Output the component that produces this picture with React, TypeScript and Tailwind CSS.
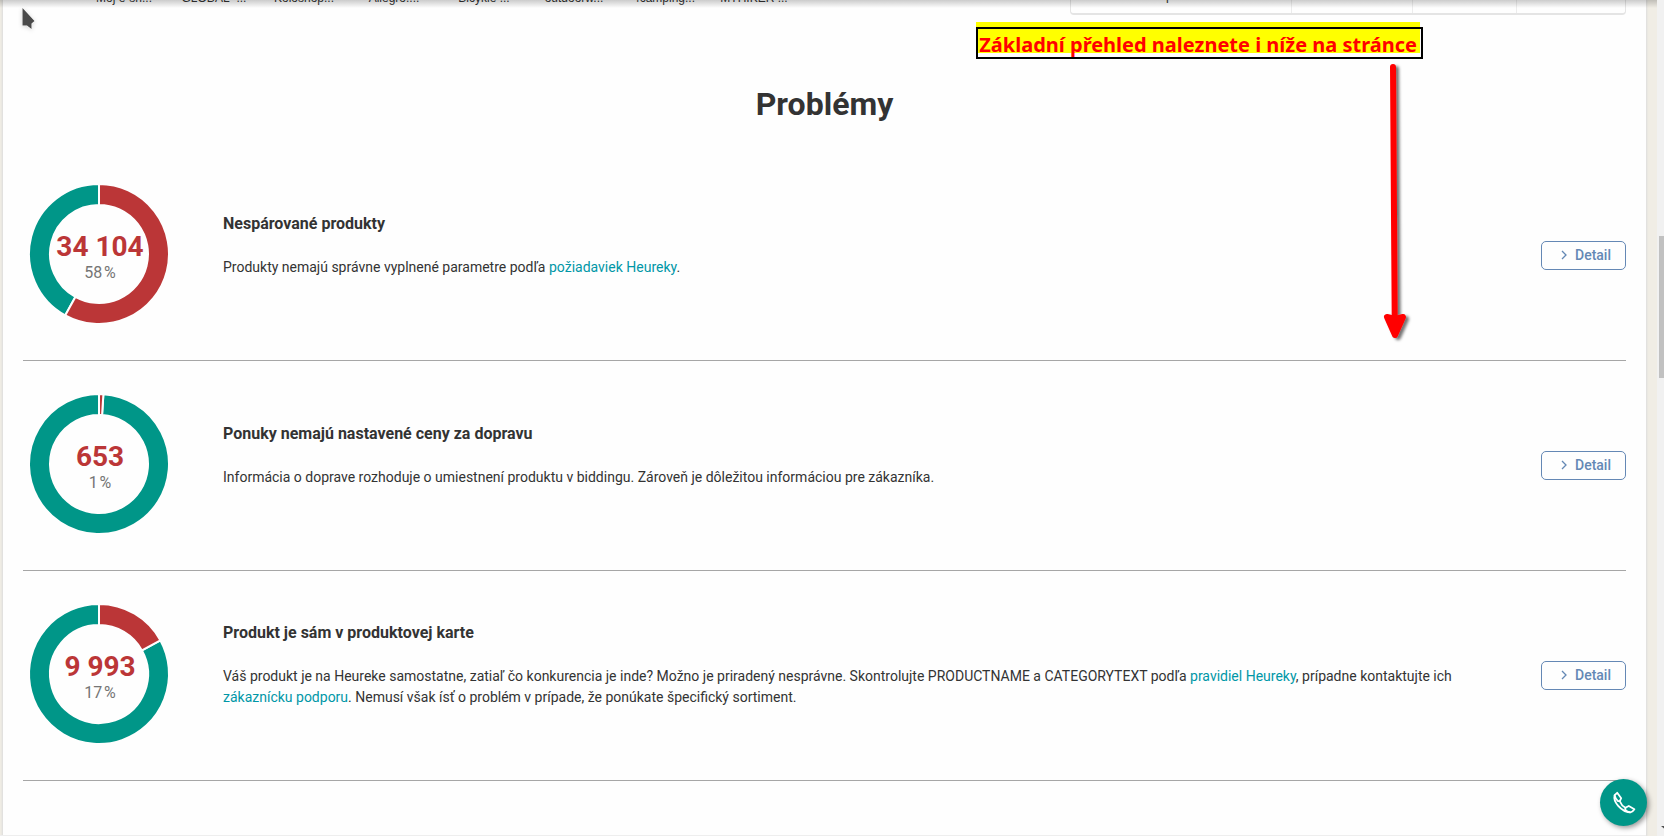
import { ReactNode } from "react";

const shops = ["Môj e-sh...", "GLOBAL -...", "Koloshop...", "Allegro....", "Bicykle ...", "outdoorw...", "4camping...", "MTHIKER ..."];

type Problem = { count: string; percent: number; title: string; text: ReactNode };

const linkClass = "text-[#0097a7] hover:underline";

const problems: Problem[] = [
  {
    count: "34 104",
    percent: 58,
    title: "Nespárované produkty",
    text: (
      <>
        Produkty nemajú správne vyplnené parametre podľa{" "}
        <a href="#poziadavky" className={linkClass}>požiadaviek Heureky</a>.
      </>
    ),
  },
  {
    count: "653",
    percent: 1,
    title: "Ponuky nemajú nastavené ceny za dopravu",
    text: "Informácia o doprave rozhoduje o umiestnení produktu v biddingu. Zároveň je dôležitou informáciou pre zákazníka.",
  },
  {
    count: "9 993",
    percent: 17,
    title: "Produkt je sám v produktovej karte",
    text: (
      <>
        Váš produkt je na Heureke samostatne, zatiaľ čo konkurencia je inde? Možno je priradený nesprávne. Skontrolujte
        PRODUCTNAME a CATEGORYTEXT podľa <a href="#pravidla" className={linkClass}>pravidiel Heureky</a>, prípadne
        kontaktujte ich <a href="#podpora" className={linkClass}>zákaznícku podporu</a>. Nemusí však ísť o problém v
        prípade, že ponúkate špecifický sortiment.
      </>
    ),
  },
];

function slice(from: number, to: number) {
  const point = (radius: number, share: number) => {
    const angle = share * 2 * Math.PI;
    return `${69 + radius * Math.sin(angle)} ${69 - radius * Math.cos(angle)}`;
  };
  const large = to - from > 0.5 ? 1 : 0;
  return `M${point(70, from)}A70 70 0 ${large} 1 ${point(70, to)}L${point(49, to)}A49 49 0 ${large} 0 ${point(49, from)}Z`;
}

function Donut({ count, percent }: { count: string; percent: number }) {
  const share = percent / 100;
  return (
    <div className="grid h-[140px] w-[138px] shrink-0 justify-items-center">
      <svg viewBox="0 0 138 138" className="col-start-1 row-start-1 size-[138px]" overflow="visible" aria-hidden="true">
        <g stroke="#fefefe" strokeWidth="2">
          <path d={slice(share, 1)} fill="#009688" />
          <path d={slice(0, share)} fill="#bb3637" />
        </g>
      </svg>
      <div className="col-start-1 row-start-1 pt-12 pl-0.5 text-center">
        <div className="text-[28px] leading-7 font-bold whitespace-nowrap text-[#bb3637]">{count}</div>
        <div className="text-base leading-6 text-[#757575]">{percent}&#8202;%</div>
      </div>
    </div>
  );
}

function ProblemRow({ problem }: { problem: Problem }) {
  return (
    <li className="flex items-center border-b border-[#a6a6a6] pt-[34px] pb-[35px] pl-[7px]">
      <Donut count={problem.count} percent={problem.percent} />
      <div className="ml-[55px] min-w-0 flex-1">
        <h2 className="text-base leading-6 font-bold">{problem.title}</h2>
        <p className="my-[21px] text-sm leading-[21px]">{problem.text}</p>
      </div>
      <button
        type="button"
        className="ml-20 flex h-[29px] w-[85px] shrink-0 items-center justify-end gap-2 rounded-[5px] border border-[#6488b5] pr-3.5 text-sm font-medium text-[#6488b5]"
      >
        <svg viewBox="0 0 6 10" className="h-2.5 w-1.5" fill="none" stroke="currentColor" strokeWidth="1.3" aria-hidden="true">
          <path d="M1 1l4 4-4 4" />
        </svg>
        Detail
      </button>
    </li>
  );
}

export default function App() {
  return (
    <div className="relative flex min-h-screen overflow-hidden bg-[#f0ede5] pl-[3px] font-['Roboto',sans-serif] text-[#333]">
      <main className="min-w-0 flex-1 bg-[#fefefe] px-5 shadow-[0_0_2px_1px_#dcdcdc]">
        <div className="flex h-[15px] items-end justify-between overflow-hidden">
          <div className="ml-14 grid h-[15px] w-[720px] grid-cols-8 font-['Liberation_Sans',sans-serif] text-xs leading-3 whitespace-nowrap">
            {shops.map((shop) => (
              <span key={shop} className="-mt-2 text-center">{shop}</span>
            ))}
          </div>
          <div className="grid h-5 w-[556px] grid-cols-[221px_121px_104px_1fr] divide-x divide-[#ececec] rounded border border-b-2 border-[#e4e4e4] text-xs">
            <span className="-mt-2 pl-[95px] leading-4">p</span>
            <span />
            <span />
            <span />
          </div>
        </div>
        <h1 className="mt-[69px] text-center text-[32px] leading-10 font-bold">Problémy</h1>
        <ul className="mt-[27px] pb-[55px]">
          {problems.map((problem) => (
            <ProblemRow key={problem.title} problem={problem} />
          ))}
        </ul>
      </main>

      <div className="ml-[11px] flex w-[7px] shrink-0 flex-col justify-between overflow-hidden bg-[#f1f1f1] pt-[236px] pb-[7px] pl-0.5">
        <div className="h-[142px] bg-[#c1c1c1]" />
        <svg className="ml-0.5 h-[3px] w-[7px]" viewBox="0 0 7 3" aria-hidden="true">
          <path d="M0 0h7L3.500 3z" fill="#505050" />
        </svg>
      </div>

      <div className="absolute inset-x-0 top-0 mr-[7px] h-2 bg-linear-to-b from-black/20 to-transparent" />
      <div className="absolute inset-x-0 bottom-0 mr-[18px] h-px bg-[#eeeeee]" />

      <svg className="absolute top-2 left-[22px] h-[22px] w-4 drop-shadow-sm" viewBox="0 0 16 22" aria-hidden="true">
        <path d="M.5 0v17.500h4.500l4.500 3.500v-5.500l3-2.500z" fill="#4a4a4a" stroke="#fff" strokeWidth="1" paintOrder="stroke" />
      </svg>

      <div className="absolute top-[27px] right-[241px]">
        <span className="absolute -top-[5px] right-[3px] left-0 h-[31px] bg-[#ff0]" />
        <p className="relative border-2 border-black pt-1 pr-1 pl-px font-['Noto_Sans',sans-serif] text-xl leading-6 font-bold whitespace-nowrap text-[#f00]">
          Základní přehled naleznete i níže na stránce
        </p>
      </div>

      <svg className="absolute top-[60px] right-[250px] h-[290px] w-9" viewBox="0 0 36 290" aria-hidden="true">
        <defs>
          <filter id="arrow-shadow" x="-50%" y="-5%" width="220%" height="110%">
            <feDropShadow dx="3" dy="2" stdDeviation="1.5" floodOpacity="0.55" />
          </filter>
        </defs>
        <g fill="#f00" stroke="#f00" strokeLinejoin="round" strokeLinecap="round" filter="url(#arrow-shadow)">
          <path d="M15 7l1.700 250" strokeWidth="6" />
          <path d="M9 257l8 2 8-2-8 18z" strokeWidth="6" />
        </g>
      </svg>

      <button
        type="button"
        aria-label="Zavolať"
        className="absolute right-[17px] bottom-[10px] grid size-[47px] place-items-center rounded-full bg-[#009688] shadow-[2px_2px_5px_rgba(0,0,0,0.4)]"
      >
        <svg viewBox="0 0 24 24" className="size-6" fill="none" stroke="#fff" strokeWidth="1.8" strokeLinejoin="round" aria-hidden="true">
          <path d="M5.200 1.800L2.600 4.200c-.8 3 .4 7 3.600 10.600 3.400 3.800 7.800 6.400 12.200 6.600 1.400-.2 2.800-1.400 4-3.200l-5.600-3.200-3.400 1.800c-2.400-1.400-4.600-4-5.600-6.600l1.400-3z" />
          <path d="M2.600 4.200c.4 2.200 1.600 4.400 3.400 6l1.800 0M18.400 21.400c-2.200-.2-4-1.200-5.200-2.600l.2-2" />
        </svg>
      </button>
    </div>
  );
}
